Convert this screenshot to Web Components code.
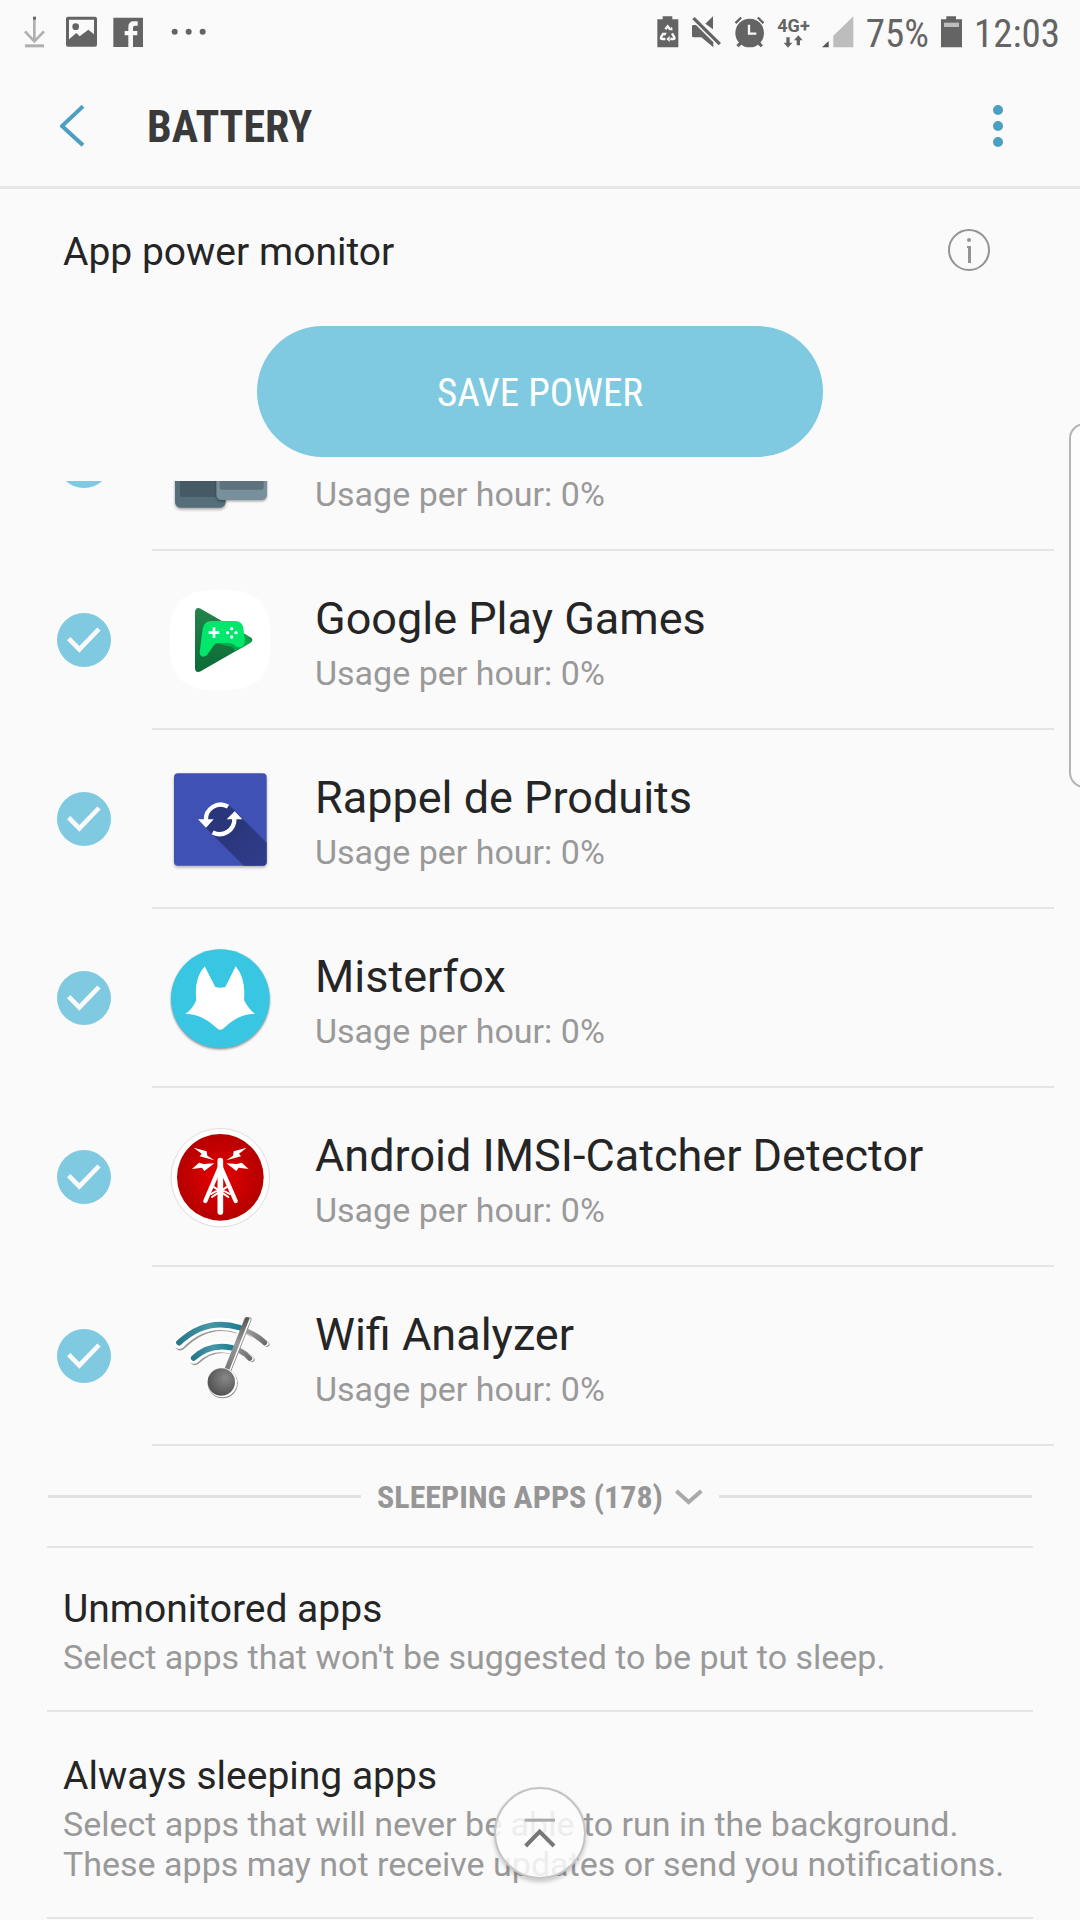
<!DOCTYPE html>
<html lang="en">
<head>
<meta charset="utf-8">
<meta name="viewport" content="width=device-width">
<title>Battery</title>
<style>
  html { background: #fafafa; }
  body { margin: 0; font-family: Roboto, "Noto Sans", sans-serif; color: #252525; }
</style>
</head>
<body>
<battery-screen></battery-screen>

<script>
const define = (name, html) => customElements.define(name, class extends HTMLElement {
  constructor() {
    super();
    const t = document.createElement('template');
    t.innerHTML = html;
    this.attachShadow({ mode: 'open' }).append(t.content.cloneNode(true));
  }
});

define('status-bar', `
<style>
  :host { display: flex; justify-content: space-between; align-items: center; height: 64px; padding: 0 20px 0 24px;
    color: #646464; font: 39px "Roboto Condensed", Roboto, sans-serif; }
  div { display: flex; align-items: center; }
  svg { display: block; fill: currentColor; }
  .left { gap: 16px; }
  .right { gap: 12px; }
  .value { padding-top: 3px; }
  .net { display: grid; justify-items: center; font: 700 18px/18px Roboto, sans-serif; }
</style>
<div class="left">
  <svg width="26" height="32" viewBox="72 46 78 96"><path d="M103 56V122M75 92L103 122L132 92" fill="none" stroke="#b0b0b0" stroke-width="8"/><path d="M99 48h9v9h-9z"/><path d="M75 131h57v9H75z" fill="#b0b0b0"/></svg>
  <svg width="31" height="32" viewBox="198 46 93 96"><path fill-rule="evenodd" d="M204 48h81q6 0 6 6v78q0 6-6 6h-81q-6 0-6-6V54q0-6 6-6zM207 57v59L229 97L239 107L265 87L282 101V57z"/><circle cx="227" cy="78" r="10"/></svg>
  <svg width="31" height="32" viewBox="340 46 93 96"><path d="M341 51h89v88h-30v-35h13v-13h-13V81q0-6 6-6h8V62h-11q-17 0-17 17v12h-11v13h11v35h-45z"/></svg>
  <svg width="60" height="32" viewBox="480 46 180 96" fill="#444"><circle cx="524" cy="93" r="9"/><circle cx="566" cy="93" r="9"/><circle cx="608" cy="93" r="9"/></svg>
</div>
<div class="right">
  <svg width="22" height="32" viewBox="56 47 66 96"><path d="M57 57h16v-9h29v9h18v84H57z"/><g fill="none" stroke="#fafafa" stroke-width="7"><path d="M81 87L88 78L95 87M75 99L68 111Q66 116 72 116H81M101 99L108 111Q110 116 105 116H96"/></g><path d="M72 97h13l-5 10zM91 90h12l-2-11zM94 107v18l-10-9z" fill="#fafafa"/></svg>
  <svg width="31" height="32" viewBox="165 47 93 96"><path d="M176 50L255 128L248 135L169 57zM208 70L231 48V87zM168 78Q168 74 172 74H180L232 126V141L196 111H172Q168 111 168 107z"/></svg>
  <svg width="31" height="32" viewBox="289 47 93 96"><circle cx="336" cy="98" r="43"/><path d="M291 66L308 49L313 54L296 71zM380 66L363 49L358 54L375 71zM305 125L296 135L303 141L313 131zM367 125L376 135L369 141L359 131z"/><path d="M334 73v27h22" fill="none" stroke="#fafafa" stroke-width="7"/></svg>
  <span class="net">4G+
    <svg width="20" height="13" viewBox="448 106 60 39"><path d="M458 113h10v16h8l-13 15l-13-15h8zM489 137h10v-15h8l-13-15l-13 15h8z"/></svg></span>
  <svg width="32" height="32" viewBox="554 47 96 96"><path d="M554 141L574 122V141z" fill="#555"/><path d="M588 141V106L648 48V141z" fill="#bdbdbd"/></svg>
  <span class="value">75%</span>
  <svg width="21" height="32" viewBox="906 47 63 96"><path d="M906 57h16v-9h29v9h18v84h-63z"/><path d="M915 67h45v13h-45z" fill="#bdbdbd"/></svg>
  <span class="value">12:03</span>
</div>`);

define('app-bar', `
<style>
  :host { display: flex; align-items: center; height: 120px; border-bottom: 3px solid #e6e6e6; padding: 2px 64px 0 52px; }
  h1 { flex: 1; margin: 0; padding: 2px 0 0 53px; font: 700 44px "Roboto Condensed", Roboto, sans-serif; color: #3a3a3a; }
  button { border: 0; padding: 0; background: none; display: grid; place-items: center; width: 42px; height: 72px; }
  button.more { width: 36px; }
</style>
<button aria-label="Back"><svg width="26" height="42" viewBox="179 317 78 126"><path d="M248 321L185 380L248 438" fill="none" stroke="#4c9fc0" stroke-width="12"/></svg></button>
<h1><slot></slot></h1>
<button class="more" aria-label="More options"><svg width="10" height="42" viewBox="0 0 10 42" fill="#4c9fc0"><circle cx="5" cy="5" r="5"/><circle cx="5" cy="21" r="5"/><circle cx="5" cy="37" r="5"/></svg></button>`);

define('power-header', `
<style>
  :host { display: grid; justify-items: center; padding-bottom: 24px; }
  .line { display: flex; justify-content: space-between; align-items: center; justify-self: stretch; height: 125px; padding: 0 90px 0 63px; box-sizing: border-box; }
  h2 { margin: 0; font-size: 39px; font-weight: 400; }
  .info { border: 0; padding: 0 0 4px; background: none; }
  .info svg { display: block; }
  .save { margin-top: 12px; width: 52.4%; height: 131px; border: 0; border-radius: 66px; padding: 3px 0 0; background: #7fcae1; color: #fff; font: 39px "Roboto Condensed", Roboto, sans-serif; }
</style>
<div class="line"><h2>App power monitor</h2>
<button class="info" aria-label="Information"><svg width="42" height="42" viewBox="0 0 42 42" fill="#949494"><circle cx="21" cy="21" r="20" fill="none" stroke="#949494" stroke-width="2"/><circle cx="21" cy="11" r="2"/><path d="M19 17h4v17h-3V19h-1z"/></svg></button></div>
<button class="save">SAVE POWER</button>`);

define('app-row', `
<style>
  :host { display: block; }
  label { display: flex; height: 179px; }
  .check { display: grid; place-items: center; align-self: center; width: 54px; height: 54px; padding: 0 41px 2px 57px; }
  .check > * { grid-area: 1 / 1; width: 54px; height: 54px; margin: 0; }
  input { appearance: none; border-radius: 50%; background: #7fcae1; }
  .check svg { pointer-events: none; }
  .body { flex: 1; display: flex; align-items: center; gap: 45px; padding-left: 18px; margin-right: 26px; border-bottom: 2px solid #e4e4e4; }
  ::slotted(svg) { flex: none; width: 100px; height: 100px; overflow: visible; }
  .text { display: grid; padding-top: 1px; }
  .name { min-height: 66px; font-size: 45px; line-height: 66px; }
  .usage { font-size: 34px; line-height: 42px; color: #999; }
</style>
<label>
  <span class="check"><input type="checkbox" checked><svg viewBox="51 159 162 162"><path d="M86 236L118 268L177 207" fill="none" stroke="#fafafa" stroke-width="14"/></svg></span>
  <span class="body"><slot name="icon"></slot>
    <span class="text"><span class="name"><slot></slot></span><span class="usage">Usage per hour: 0%</span></span></span>
</label>`);

define('sleeping-divider', `
<style>
  :host { display: block; margin: 0 47px; border-bottom: 2px solid #e4e4e4; }
  button { display: flex; align-items: center; gap: 16px; width: 100%; height: 100px; border: 0; padding: 0 1px; background: none;
    color: #969696; font: 700 32px "Roboto Condensed", Roboto, sans-serif; }
  button::before, button::after { content: ""; flex: 1; height: 3px; background: #e2e2e2; }
  span { display: flex; align-items: center; gap: 12px; padding-top: 1px; }
</style>
<button><span><slot></slot><svg width="28" height="16" viewBox="1121 144 84 48"><path d="M1125 150L1162 183L1200 150" fill="none" stroke="#aaa" stroke-width="12"/></svg></span></button>`);

define('link-item', `
<style>
  :host { display: block; margin: 0 47px; border-bottom: 2px solid #e4e4e4; }
  a { display: block; padding: 33px 16px; color: inherit; text-decoration: none; }
  .t { display: block; font-size: 39px; line-height: 56px; }
  .d { display: block; font-size: 34px; line-height: 40px; color: #999; }
</style>
<a href="#"><span class="t"><slot name="title"></slot></span><span class="d"><slot></slot></span></a>`);

define('top-button', `
<style>
  :host { position: fixed; left: calc(50% - 46px); bottom: 41px; }
  button { display: grid; place-items: center; width: 92px; height: 92px; padding: 0; border: 2px solid #c4c4c4; border-radius: 50%;
    background: rgba(252,252,252,.85); box-shadow: 0 3px 4px rgba(0,0,0,.2); }
</style>
<button aria-label="Go to top"><svg width="32" height="30" viewBox="191 178 96 90"><path d="M193 180h91v9h-91z" fill="#aaa"/><path d="M196 262L238 219L281 262" fill="none" stroke="#777" stroke-width="12"/></svg></button>`);

define('edge-handle', `
<style>
  :host { position: fixed; right: -20px; top: 423px; width: 27px; height: 361px; border: 2px solid #b4b4b4; border-radius: 18px; background: #fdfdfd; }
</style>`);

define('battery-screen', `
<style>
  :host { display: block; }
  .list { overflow: hidden; }
  .list app-row:first-child { margin-top: -109px; }
  link-item + link-item { padding-top: 3px; }
</style>
<status-bar></status-bar>
<app-bar>BATTERY</app-bar>
<main>
  <power-header></power-header>
  <div class="list">
    <app-row>
      <svg slot="icon" viewBox="510 633 300 300"><g style="filter:drop-shadow(0 5px 4px rgba(0,0,0,.35))"><rect x="525" y="640" width="152" height="283" rx="16" fill="#546e7a"/></g><rect x="540" y="660" width="137" height="231" rx="8" fill="#455a64"/><g style="filter:drop-shadow(0 4px 3px rgba(0,0,0,.35))"><rect x="649" y="640" width="152" height="260" rx="16" fill="#78909c"/></g><rect x="659" y="660" width="132" height="209" rx="8" fill="#5d727c"/></svg>
    </app-row>
    <app-row>Google Play Games
      <svg slot="icon" viewBox="391 90 300 300"><defs><linearGradient id="pg" x2="0" y2="1"><stop stop-color="#25834c"/><stop offset="1" stop-color="#0a6b34"/></linearGradient><clipPath id="pt"><path d="M466 156Q468 140 483 146L632 232Q644 240 632 248L483 334Q468 340 466 326z"/></clipPath></defs><path d="M541 89C655 89 692 126 692 240S655 391 541 391S390 354 390 240S427 89 541 89z" fill="#fff"/><path d="M466 156Q468 140 483 146L632 232Q644 240 632 248L483 334Q468 340 466 326z" fill="url(#pg)"/><g clip-path="url(#pt)"><path d="M528 250L578 262L592 280L640 250L612 210z" fill="#04a84c"/></g><path d="M515 183H586Q607 184 611 203L615 238Q617 262 600 262Q590 262 583 254Q577 249 566 249H534Q527 249 521 258L504 283Q499 290 490 290Q480 289 480 276L489 206Q493 184 515 183z" fill="#00e76c"/><g fill="#fff"><path d="M519 202h8v12h12v8h-12v12h-8v-12h-12v-8h12z"/><circle cx="576" cy="206" r="5"/><circle cx="576" cy="231" r="5"/><circle cx="564" cy="218" r="5"/><circle cx="589" cy="218" r="5"/></g></svg>
    </app-row>
    <app-row>Rappel de Produits
      <svg slot="icon" viewBox="391 627 300 300"><defs><linearGradient id="sh" x1="0" y1="0" x2="1" y2="1"><stop offset=".4" stop-color="#2a367b"/><stop offset="1" stop-color="#303d8c"/></linearGradient></defs><rect x="403" y="640" width="278" height="277" rx="12" fill="#3f51b5" style="filter:drop-shadow(0 5px 4px rgba(0,0,0,.3))"/><path d="M497 802L612 917H669Q681 917 681 905V848L570 737L520 740L495 778z" fill="url(#sh)"/><g fill="none" stroke="#fff" stroke-width="13"><path d="M499 782A44 44 0 0 1 565 740"/><path d="M584 776A44 44 0 0 1 519 817"/></g><path d="M475 778H522L499 803zM561 778H608L585 754z" fill="#fff"/></svg>
    </app-row>
    <app-row>Misterfox
      <svg slot="icon" viewBox="391 84 300 300"><circle cx="542" cy="236" r="148" fill="#38c6e3" style="filter:drop-shadow(0 4px 3px rgba(0,0,0,.45))"/><path d="M495 139L527 201Q542 205 557 201L588 139Q619 175 613 240Q625 265 646 282Q600 279 552 325Q542 334 532 325Q484 280 437 282Q460 266 470 240Q462 177 495 139z" fill="#fff"/></svg>
    </app-row>
    <app-row>Android IMSI-Catcher Detector
      <svg slot="icon" viewBox="391 621 300 300"><defs><radialGradient id="rd"><stop stop-color="#e60000"/><stop offset="1" stop-color="#b50000"/></radialGradient></defs><circle cx="542" cy="773" r="148" fill="#fff" stroke="#ddd" stroke-width="3"/><circle cx="542" cy="772" r="130" fill="url(#rd)"/><g fill="none" stroke="#fff" stroke-linecap="round" stroke-linejoin="round"><path d="M542 722V876" stroke-width="17"/><path d="M539 745L497 843M545 745L588 843" stroke-width="13"/><path d="M521 800L566 831M563 800L517 831M514 822Q542 801 570 822" stroke-width="6"/></g><path d="M462 683L501 694L503 707L524 721L480 709L486 701zM457 747L478 728L492 732L524 730L494 753L487 743zM621 683L582 694L580 707L560 721L604 709L598 701zM627 747L606 728L592 732L560 730L590 753L597 743z" fill="#fff"/></svg>
    </app-row>
    <app-row>Wifi Analyzer
      <svg slot="icon" viewBox="391 78 300 300"><defs><linearGradient id="wb" x2="1"><stop stop-color="#26788c"/><stop offset=".5" stop-color="#4797a8"/><stop offset="1" stop-color="#1f7d92"/></linearGradient><linearGradient id="wg" x2="1" y2="1"><stop stop-color="#aaa"/><stop offset="1" stop-color="#555"/></linearGradient><linearGradient id="ws" x2="0" y2="1"><stop stop-color="#555"/><stop offset=".5" stop-color="#999"/><stop offset="1" stop-color="#777"/></linearGradient><radialGradient id="wk" cx=".65" cy=".35" r=".8"><stop stop-color="#888"/><stop offset="1" stop-color="#484848"/></radialGradient></defs><g fill="none" stroke-linecap="round"><path d="M422 196Q502 117 590 144M466 240Q516 194 570 206" stroke="#999" stroke-width="31"/><path d="M419 190Q500 108 602 144M463 234Q514 186 579 205" stroke="#fff" stroke-width="34"/><path d="M418 188Q500 111 600 143" stroke="url(#wb)" stroke-width="17"/><path d="M462 234Q510 189 576 203" stroke="url(#wb)" stroke-width="17"/><path d="M625 157Q656 169 682 193M602 214Q622 222 637 239" stroke="#888" stroke-width="15"/><path d="M624 156Q655 168 680 191M601 213Q621 221 635 237" stroke="#fff" stroke-width="14"/><path d="M622 153Q651 165 675 188M598 210Q616 219 630 235" stroke="url(#wg)" stroke-width="15"/><path d="M628 119L568 270" stroke="#888" stroke-width="15"/><path d="M626 119L566 270" stroke="#fff" stroke-width="14"/></g><path d="M615 115Q622 107 630 115L569 270H553z" fill="url(#ws)"/><circle cx="549" cy="310" r="45" fill="#888"/><circle cx="548" cy="308" r="44" fill="#fff"/><circle cx="545" cy="306" r="41" fill="url(#wk)"/></svg>
    </app-row>
  </div>
  <sleeping-divider>SLEEPING APPS (178)</sleeping-divider>
  <link-item><span slot="title">Unmonitored apps</span>Select apps that won't be suggested to be put to sleep.</link-item>
  <link-item><span slot="title">Always sleeping apps</span>Select apps that will never be able to run in the background. These apps may not receive updates or send you notifications.</link-item>
</main>
<edge-handle></edge-handle>
<top-button></top-button>`);
</script>
</body>
</html>
